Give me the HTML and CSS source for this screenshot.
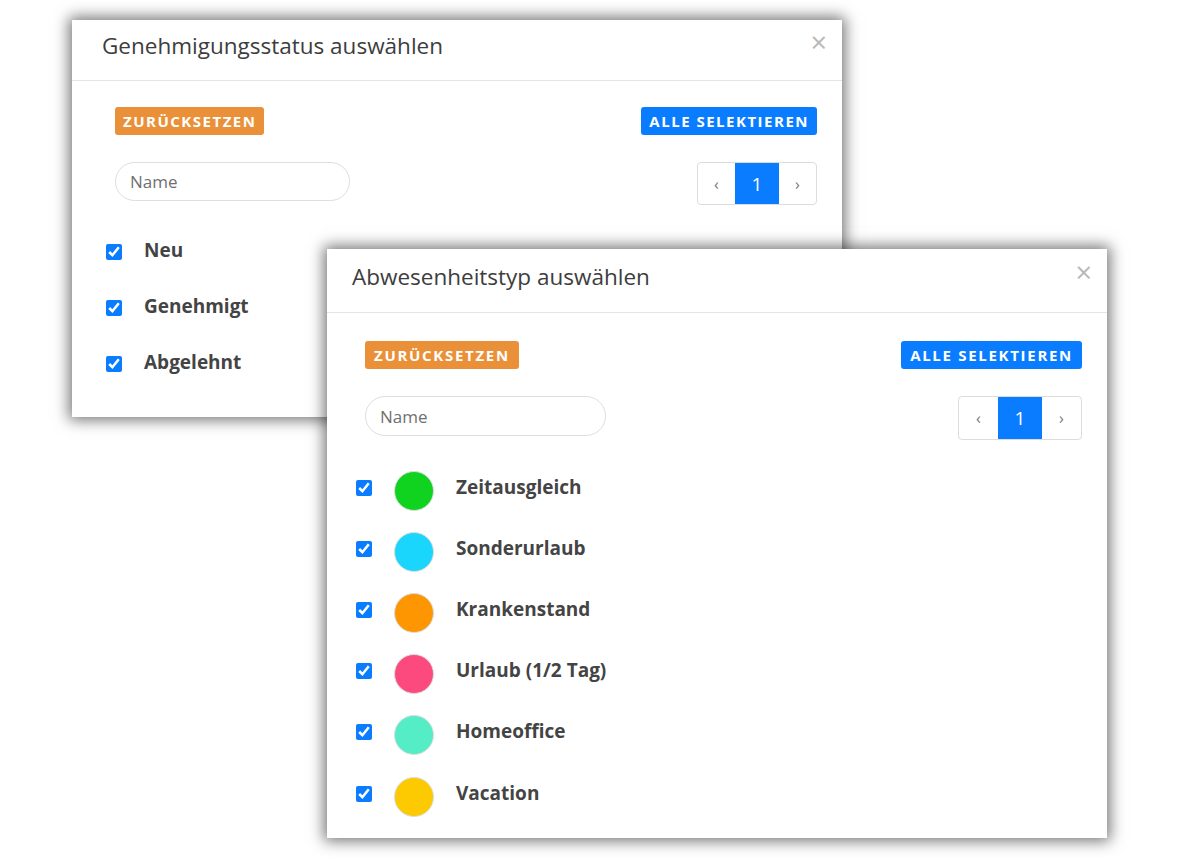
FILE: index.html
```html
<!DOCTYPE html>
<html>
<head>
<meta charset="utf-8">
<link rel="stylesheet" href="styles.css">
</head>
<body>

<div class="desk">

    <!-- first dialog: status -->
    <div class="dialog dlg-status">
        <div class="dlg-head">
            <h3 class="dlg-title">Genehmigungsstatus auswählen</h3>
            <span class="close">&times;</span>
        </div>
        <div class="dlg-body">
            <div class="btn-row">
                <button class="btn btn-reset">ZURÜCKSETZEN</button>
                <button class="btn btn-all">ALLE SELEKTIEREN</button>
            </div>
            <div class="filter-row">
                <input class="search" type="text" placeholder="Name">
                <div class="pager">
                    <span class="pg">&lsaquo;</span>
                    <span class="pg active">1</span>
                    <span class="pg">&rsaquo;</span>
                </div>
            </div>
            <ul class="list">
                <li class="item"><input type="checkbox" checked><span class="lbl">Neu</span></li>
                <li class="item"><input type="checkbox" checked><span class="lbl">Genehmigt</span></li>
                <li class="item"><input type="checkbox" checked><span class="lbl">Abgelehnt</span></li>
            </ul>
        </div>
    </div>

    <!-- second dialog: absence type -->
    <div class="dialog dlg-type">
        <div class="dlg-head">
            <h3 class="dlg-title">Abwesenheitstyp auswählen</h3>
            <span class="close">&times;</span>
        </div>
        <div class="dlg-body">
            <div class="btn-row">
                <button class="btn btn-reset">ZURÜCKSETZEN</button>
                <button class="btn btn-all">ALLE SELEKTIEREN</button>
            </div>
            <div class="filter-row">
                <input class="search" type="text" placeholder="Name">
                <div class="pager">
                    <span class="pg">&lsaquo;</span>
                    <span class="pg active">1</span>
                    <span class="pg">&rsaquo;</span>
                </div>
            </div>
            <ul class="list">
                <li class="item"><input type="checkbox" checked><span class="dot green"></span><span class="lbl">Zeitausgleich</span></li>
                <li class="item"><input type="checkbox" checked><span class="dot cyan"></span><span class="lbl">Sonderurlaub</span></li>
                <li class="item"><input type="checkbox" checked><span class="dot orange"></span><span class="lbl">Krankenstand</span></li>
                <li class="item"><input type="checkbox" checked><span class="dot pink"></span><span class="lbl">Urlaub (1/2 Tag)</span></li>
                <li class="item"><input type="checkbox" checked><span class="dot mint"></span><span class="lbl">Homeoffice</span></li>
                <li class="item"><input type="checkbox" checked><span class="dot yellow"></span><span class="lbl">Vacation</span></li>
            </ul>
        </div>
    </div>

</div>

</body>
</html>
```

FILE: styles.css
```css
body, html {
    margin: 0;
    padding: 0;
    width: 100%;
    height: 100%;
    background: #fff;
    font-family: 'Open Sans', 'Noto Sans', sans-serif;
    color: #444;
}

.desk {
    position: relative;
    width: 1195px;
    height: 857px;
}

/* the two windows sit freely on the canvas */
.dialog {
    position: absolute;
    background: #fff;
    box-shadow: 0 0 14px 3px rgba(0, 0, 0, 0.55);
}

.dlg-status {
    left: 72px;
    top: 20px;
    width: 770px;
    height: 397px;
}

.dlg-type {
    left: 327px;
    top: 249px;
    width: 780px;
    height: 589px;
}

.dlg-head {
    display: flex;
    justify-content: space-between;
    align-items: flex-start;
    border-bottom: 1px solid #e5e5e5;
    height: 60px;
    padding: 0 15px 0 30px;
}

.dlg-type .dlg-head {
    height: 63px;
    padding-left: 25px;
}

.dlg-title {
    margin: 0;
    padding-top: 10px;
    font-size: 22.5px;
    font-weight: normal;
    color: #3d3d3d;
}

.dlg-type .dlg-title {
    padding-top: 12px;
}

.close {
    font-size: 29px;
    line-height: 1;
    color: #b8b8b8;
    padding-top: 7px;
}

.dlg-type .close {
    padding-top: 8px;
}

.dlg-body {
    padding: 26px 25px 0 43px;
}

.dlg-type .dlg-body {
    padding: 28px 25px 0 38px;
}

.btn-row {
    display: flex;
    justify-content: space-between;
}

.btn {
    border: none;
    border-radius: 3px;
    height: 28px;
    padding: 0 8px;
    font-family: 'Open Sans', sans-serif;
    font-weight: bold;
    font-size: 15px;
    letter-spacing: 1.5px;
    color: #fff;
}

.dlg-type .btn {
    padding: 0 9px;
    letter-spacing: 1.7px;
}

.btn-reset {
    background: #ea9038;
}

.btn-all {
    background: #0a7cff;
}

.filter-row {
    display: flex;
    justify-content: space-between;
    align-items: flex-start;
    margin-top: 27px;
}

.search {
    width: 235px;
    height: 39px;
    box-sizing: border-box;
    border: 1px solid #dedede;
    border-radius: 20px;
    padding: 0 14px;
    font-family: 'Open Sans', sans-serif;
    font-size: 17px;
    color: #444;
    outline: none;
}

.dlg-type .search {
    width: 241px;
    height: 40px;
}

.search::placeholder {
    color: #6f6f6f;
}

.pager {
    display: flex;
    height: 43px;
    border: 1px solid #dcdcdc;
    border-radius: 4px;
    box-sizing: border-box;
    overflow: hidden;
}

.dlg-type .pager {
    height: 44px;
}

.pg {
    width: 37px;
    display: flex;
    align-items: center;
    justify-content: center;
    font-size: 16px;
    color: #777;
}

.dlg-type .pg {
    width: 39px;
}

.pg.active {
    width: 44px;
    background: #0a7cff;
    color: #fff;
    font-size: 19px;
}

.list {
    list-style: none;
    margin: 19px 0 0 -9px;
    padding: 0;
}

.dlg-type .list {
    margin: 17px 0 0 -9px;
}

.item {
    display: flex;
    align-items: center;
    height: 56px;
}

.dlg-type .item {
    height: 61.2px;
}

.item input {
    width: 16px;
    height: 16px;
    margin: 0 22px 0 0;
    accent-color: #0a7cff;
}

.lbl {
    font-size: 19px;
    font-weight: bold;
    color: #444;
    margin-top: -4px;
}

.dlg-type .lbl {
    margin-top: -2px;
}

.dot {
    width: 38px;
    height: 38px;
    border-radius: 50%;
    border: 1px solid #ddd;
    margin: 6px 22px 0 0;
}

.green { background: #10d31f; }
.cyan { background: #1ad6fc; }
.orange { background: #fd9600; }
.pink { background: #fc4a7e; }
.mint { background: #55edc6; }
.yellow { background: #fdc900; }
```
